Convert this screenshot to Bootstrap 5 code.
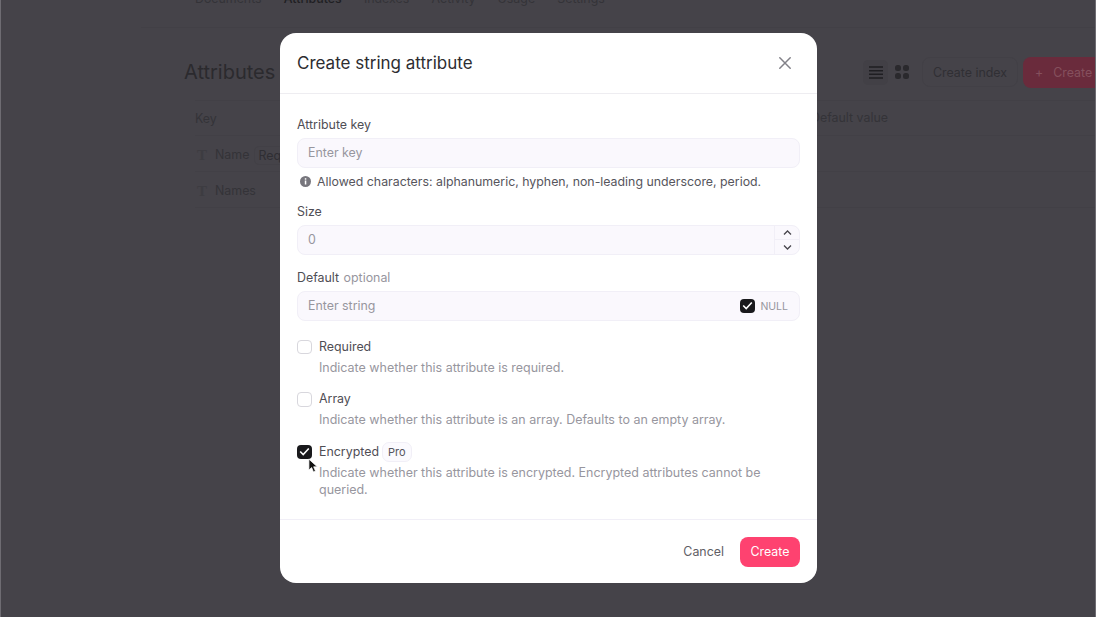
<!DOCTYPE html>
<html lang="en">
<head>
<meta charset="utf-8">
<title>Create string attribute</title>
<link href="https://cdn.jsdelivr.net/npm/bootstrap@5.3.0/dist/css/bootstrap.min.css" rel="stylesheet">
<style>
html,body{height:617px;overflow:hidden}
body{font-family:Inter,"Liberation Sans",sans-serif;background:#454349;color:#2e2d32;font-size:12.4px;letter-spacing:0}
.page-bg{height:617px;width:1096px;overflow:hidden;border-left:1px solid #6e6c72;border-right:1px solid #6e6c72;padding-left:183px}
.tab-row{height:39px;margin:-11px 0 0 -43px;gap:22.200px;padding-left:54px;color:#343338;border-bottom:1px solid #424046;width:1000px;line-height:19px}
.tab-row .cur{color:#201f23;font-weight:500}
.head-row{margin-top:28px;width:939px;height:32px}
.head-title{font-size:20px;color:#2b2a2e;line-height:32px}
.view-btn{width:25px;height:25px;display:flex;align-items:center;justify-content:center;margin-left:1px}
.view-on{background:#424046;border-radius:5px}
.idx-btn{margin-left:8px;height:30px;width:96px;border:1px solid #424046;border-radius:8px;color:#302f34;display:flex;align-items:center;justify-content:center;padding-top:2px}
.add-btn{margin-left:5px;height:31px;width:100px;background:#6a2b3c;border-radius:8px;color:#85505d;display:flex;align-items:center;padding:2px 0 0 12px;gap:10px;flex:none}
.key-head{margin:12px 0 0 11px;padding-top:9px;color:#343338;height:36px;width:900px;border-top:1px solid #424046;border-bottom:1px solid #424046}
.data-row{height:36px;width:900px;margin-left:11px;padding:3px 0 0 2px;gap:8px;color:#343338;border-bottom:1px solid #424046}
.t-glyph{font-family:"Liberation Serif",serif;color:#3d3c41;font-size:15px;font-weight:700;width:10px;line-height:1}
.req-tag{border:1px solid #424046;border-radius:5px;padding:0 3px;margin-left:-3px;line-height:17px;color:#2f2e33}
.dflt{position:absolute;left:811px;top:109px;color:#343338}
.modal-box{position:absolute;left:280px;top:33px;width:537px;height:550px;display:flex;flex-direction:column;background:#fff;border-radius:16px;color:#56555c}
.m-head{height:61px;padding:0 26px 0 17px;border-bottom:1px solid #eeedf1}
.m-title{font-size:17px;font-weight:400;color:#2d2d31;margin:0;padding-top:1px}
.m-close{margin-bottom:1px}
.m-body{padding:22px 17px 0;flex:1}
.f-label{display:block;line-height:18px;margin-bottom:4px;color:#4f4e55}
.f-opt{color:#97969e;margin-left:1px}
.f-input{height:29.5px;background:#faf8fd;border:1px solid #f1eff7;border-radius:8px;color:#97969e;padding-left:10px}
.f-ph{padding-top:2px}
.f-hint{margin:5px 0 12.5px;line-height:18px;gap:5px;color:#56555c;padding-left:2px;font-size:12.35px}
.f-group{margin-bottom:14.5px}
.stepper{width:25px;height:100%;border-left:1px solid #f1eff7;flex:none}
.stepper>span{flex:1;display:flex;align-items:center;justify-content:center}
.stepper>span+span{border-top:1px solid #f1eff7}
.null-wrap{gap:5px;padding-right:11px;font-size:10.5px;color:#97969e}
.null-txt{padding-top:3px}
.tick{width:15px;height:14.500px;border-radius:4px;background:#19191c;display:flex;align-items:center;justify-content:center;flex:none}
.box{width:15px;height:14.500px;border-radius:4px;border:1px solid #d8d7dd;background:#fff;flex:none;margin-top:2px}
.check-row{gap:7px;margin-bottom:14px;position:relative}
.check-first{padding-top:2.500px}
.check-first>.box{margin-top:2px}
.check-row>.tick{margin-top:2px}
.check-name{line-height:18px;height:18px;color:#4f4e55;display:flex;align-items:center;gap:3px}
.check-desc{line-height:17.500px;margin-top:3px;color:#97969e;font-size:12.47px}
.pro-tag{border:1px solid #f1eff7;background:#fbfafe;border-radius:7px;font-size:11px;padding:0 5px;line-height:18px;color:#56555c}
.cursor{position:absolute;left:11px;top:15px}
.m-foot{height:64px;border-top:1px solid #f1eff7;padding:0 17px;gap:16px}
.cancel-txt{color:#5f5e65;padding-top:2px}
.create-btn{background:#fe4270;color:#fff;border:0;border-radius:8px;height:30px;width:60px;font-size:12.4px;padding:2px 0 0}
.create-btn:hover{background:#fe4270;color:#fff}
</style>
</head>
<body>
<div class="page-bg">
  <div class="tab-row d-flex align-items-start">
    <span>Documents</span><span class="cur">Attributes</span><span>Indexes</span><span>Activity</span><span>Usage</span><span>Settings</span>
  </div>
  <div class="head-row d-flex align-items-center">
    <div class="head-title flex-grow-1">Attributes</div>
    <div class="view-btn view-on"><svg width="14" height="13" viewBox="0 0 14 13"><path d="M0 1h14M0 4.700h14M0 8.300h14M0 12h14" stroke="#1f1e22" stroke-width="1.500"/></svg></div>
    <div class="view-btn"><svg width="14" height="14" viewBox="0 0 14 14" fill="#2a292d"><rect width="6" height="6" rx="2.500"/><rect x="8" width="6" height="6" rx="2.500"/><rect y="8" width="6" height="6" rx="2.500"/><rect x="8" y="8" width="6" height="6" rx="2.500"/></svg></div>
    <div class="idx-btn">Create index</div>
    <div class="add-btn"><span>+</span><span>Create</span></div>
  </div>
  <div class="key-head">Key</div>
  <div class="data-row d-flex align-items-center"><span class="t-glyph">T</span><span>Name</span><span class="req-tag">Required</span></div>
  <div class="data-row d-flex align-items-center"><span class="t-glyph">T</span><span>Names</span></div>
  <div class="dflt">Default value</div>
</div>

<div class="modal-box">
  <div class="m-head d-flex align-items-center justify-content-between">
    <h5 class="m-title">Create string attribute</h5>
    <svg class="m-close" width="12" height="12" viewBox="0 0 12 12"><path d="M.8.800l10.400 10.400M11.200.800L.8 11.200" stroke="#828188" stroke-width="1.500" stroke-linecap="round"/></svg>
  </div>
  <div class="m-body">
    <label class="f-label">Attribute key</label>
    <div class="f-input d-flex align-items-center"><span class="f-ph">Enter key</span></div>
    <div class="f-hint d-flex align-items-center">
      <svg width="13" height="13" viewBox="0 0 13 13"><circle cx="6.500" cy="6.500" r="5.500" fill="#77767d"/><rect x="5.800" y="5.500" width="1.500" height="4" fill="#fff"/><rect x="5.800" y="3.200" width="1.500" height="1.500" fill="#fff"/></svg>
      <span>Allowed characters: alphanumeric, hyphen, non-leading underscore, period.</span>
    </div>
    <div class="f-group">
      <label class="f-label">Size</label>
      <div class="f-input d-flex align-items-center justify-content-between overflow-hidden">
        <span class="f-ph">0</span>
        <div class="stepper d-flex flex-column">
          <span><svg width="9" height="6" viewBox="0 0 9 6"><path d="M1 4.500l3.500-3.500 3.500 3.500" fill="none" stroke="#47464c" stroke-width="1.300"/></svg></span>
          <span><svg width="9" height="6" viewBox="0 0 9 6"><path d="M1 1.500l3.500 3.500 3.500-3.500" fill="none" stroke="#47464c" stroke-width="1.300"/></svg></span>
        </div>
      </div>
    </div>
    <div class="f-group">
      <label class="f-label">Default <span class="f-opt">optional</span></label>
      <div class="f-input d-flex align-items-center justify-content-between">
        <span class="f-ph">Enter string</span>
        <div class="null-wrap d-flex align-items-center">
          <span class="tick"><svg width="11" height="9" viewBox="0 0 11 9"><path d="M1.200 4.500l3 3 5.600-6" fill="none" stroke="#fff" stroke-width="1.600"/></svg></span>
          <span class="null-txt">NULL</span>
        </div>
      </div>
    </div>
    <div class="check-row check-first d-flex">
      <span class="box"></span>
      <div><div class="check-name">Required</div><div class="check-desc">Indicate whether this attribute is required.</div></div>
    </div>
    <div class="check-row d-flex">
      <span class="box"></span>
      <div><div class="check-name">Array</div><div class="check-desc">Indicate whether this attribute is an array. Defaults to an empty array.</div></div>
    </div>
    <div class="check-row d-flex">
      <span class="tick"><svg width="11" height="9" viewBox="0 0 11 9"><path d="M1.200 4.500l3 3 5.600-6" fill="none" stroke="#fff" stroke-width="1.600"/></svg></span>
      <div><div class="check-name">Encrypted <span class="pro-tag">Pro</span></div><div class="check-desc">Indicate whether this attribute is encrypted. Encrypted attributes cannot be queried.</div></div>
      <svg class="cursor" width="10" height="16" viewBox="0 0 11 17"><path d="M1 1v12l3-2.800 2 4.800 2.200-1-2-4.600h4z" fill="#111" stroke="#fff" stroke-width=".8"/></svg>
    </div>
  </div>
  <div class="m-foot d-flex align-items-center justify-content-end">
    <span class="cancel-txt">Cancel</span>
    <button class="btn create-btn" type="button">Create</button>
  </div>
</div>
<script src="https://cdn.jsdelivr.net/npm/bootstrap@5.3.0/dist/js/bootstrap.bundle.min.js"></script>
</body>
</html>
